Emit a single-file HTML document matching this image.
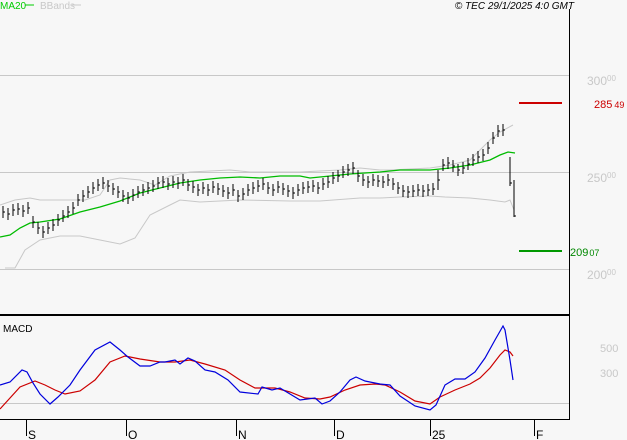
<!DOCTYPE html>
<html><head><meta charset="utf-8"><style>
html,body{margin:0;padding:0;background:#f7f7f7;width:627px;height:440px;overflow:hidden}
svg{display:block;font-family:"Liberation Sans",sans-serif}
</style></head><body>
<svg width="627" height="440" viewBox="0 0 627 440" xmlns="http://www.w3.org/2000/svg">
<rect width="627" height="440" fill="#f7f7f7"/>
<g stroke="#c8c8c8" stroke-width="1">
<line x1="0" y1="75.5" x2="569" y2="75.5"/>
<line x1="0" y1="172.5" x2="569" y2="172.5"/>
<line x1="0" y1="269.5" x2="569" y2="269.5"/>
<line x1="0" y1="403.5" x2="569" y2="403.5"/>
</g>
<line x1="569.5" y1="9" x2="569.5" y2="420" stroke="#000"/>
<line x1="0" y1="315" x2="570" y2="315" stroke="#000" stroke-width="2"/>
<line x1="0" y1="419.5" x2="570" y2="419.5" stroke="#000"/>
<g stroke="#000"><line x1="26.5" y1="419" x2="26.5" y2="436"/><line x1="126.5" y1="419" x2="126.5" y2="436"/><line x1="236.5" y1="419" x2="236.5" y2="436"/><line x1="334.5" y1="419" x2="334.5" y2="436"/><line x1="430.5" y1="419" x2="430.5" y2="436"/><line x1="534.5" y1="419" x2="534.5" y2="436"/></g>
<g font-size="12" fill="#000"><text x="28" y="439">S</text><text x="128" y="439">O</text><text x="238" y="439">N</text><text x="336" y="439">D</text><text x="432" y="439">25</text><text x="536" y="439">F</text></g>
<text x="0" y="9" font-size="10" fill="#00cc00">MA20</text><line x1="25" y1="5" x2="34" y2="5" stroke="#00cc00"/>
<text x="40" y="9" font-size="10" fill="#c8c8c8">BBands</text><line x1="72" y1="5" x2="81" y2="5" stroke="#c8c8c8"/>
<text x="574" y="9" font-size="10" font-style="italic" text-anchor="end" fill="#000">© TEC 29/1/2025 4:0 GMT</text>
<g fill="#c8c8c8" font-size="12"><text x="587" y="85">300<tspan font-size="8" dy="-4">00</tspan></text><text x="587" y="182">250<tspan font-size="8" dy="-4">00</tspan></text><text x="587" y="279">200<tspan font-size="8" dy="-4">00</tspan></text>
<text x="600" y="352" font-size="11">500</text><text x="600" y="377" font-size="11">300</text></g>
<text x="594" y="108" font-size="11" fill="#cc0000">285<tspan font-size="9" dx="2">49</tspan></text>
<text x="570" y="256" font-size="11" fill="#008800">209<tspan font-size="9" dx="1">07</tspan></text>
<line x1="519" y1="103" x2="562" y2="103" stroke="#cc0000" stroke-width="2"/>
<line x1="519" y1="251" x2="562" y2="251" stroke="#009900" stroke-width="2"/>
<text x="3" y="332" font-size="10" fill="#000">MACD</text>
<polyline fill="none" stroke="#c8c8c8" points="0,205 15,200 30,198 40,200 60,200 85,200 100,195 110,180 120,178 140,180 155,185 170,176 190,172 230,170 250,172 300,172 340,170 360,168 380,170 390,170 430,168 450,165 470,160 490,140 500,132 513,125"/>
<polyline fill="none" stroke="#c8c8c8" points="5,268 15,268 25,250 40,240 60,236 80,236 100,240 120,244 135,238 150,215 170,205 180,200 200,202 240,200 290,201 320,201 360,198 380,198 400,197 430,196 445,197 470,198 490,200 505,202 510,200 514,210"/>
<polyline fill="none" stroke="#00bb00" stroke-width="1.3" points="0,237 10,235 20,228 30,223 40,222 60,219 80,212 100,207 120,201 140,193 160,188 180,183 200,180 220,178 240,177 260,178 280,176 300,176 310,178 330,176 350,174 380,172 400,170 430,170 450,168 470,165 490,160 500,155 508,152 515,153"/>
<path fill="none" stroke="#000" stroke-width="1" d="M3 206V218M3 212h2M8 208V220M8 214h2M13 204V216M13 210h2M18 203V215M18 209h2M23 205V217M23 211h2M28 202V214M28 208h2M33 216V228M33 222h2M38 222V234M38 228h2M43 226V238M43 232h2M48 222V234M48 228h2M53 219V231M53 225h2M58 214V226M58 220h2M63 210V222M63 216h2M68 206V218M68 212h2M73 202V214M73 208h2M78 194V206M78 200h2M83 190V202M83 196h2M88 186V198M88 192h2M93 182V194M93 188h2M98 179V191M98 185h2M103 177V189M103 183h2M108 180V192M108 186h2M113 183V195M113 189h2M118 186V198M118 192h2M123 190V202M123 196h2M128 192V204M128 198h2M133 189V201M133 195h2M138 186V198M138 192h2M143 184V196M143 190h2M148 182V194M148 188h2M153 180V192M153 186h2M158 177V189M158 183h2M163 176V188M163 182h2M168 178V190M168 184h2M173 176V188M173 182h2M178 177V189M178 183h2M183 174V186M183 180h2M188 179V191M188 185h2M193 181V193M193 187h2M198 184V196M198 190h2M203 182V194M203 188h2M208 184V196M208 190h2M213 181V193M213 187h2M218 183V195M218 189h2M223 185V197M223 191h2M228 187V199M228 193h2M233 184V196M233 190h2M238 190V202M238 196h2M243 188V200M243 194h2M248 184V196M248 190h2M253 182V194M253 188h2M258 180V192M258 186h2M263 178V190M263 184h2M268 182V194M268 188h2M273 184V196M273 190h2M278 181V193M278 187h2M283 183V195M283 189h2M288 185V197M288 191h2M293 187V199M293 193h2M298 184V196M298 190h2M303 182V194M303 188h2M308 181V193M308 187h2M313 180V192M313 186h2M318 182V194M318 188h2M323 178V190M323 184h2M328 176V188M328 182h2M333 172V184M333 178h2M338 170V182M338 176h2M343 166V178M343 172h2M348 164V176M348 170h2M353 162V174M353 168h2M358 170V182M358 176h2M363 174V186M363 180h2M368 176V188M368 182h2M373 174V186M373 180h2M378 175V187M378 181h2M383 176V188M383 182h2M388 174V186M388 180h2M393 178V190M393 184h2M398 182V194M398 188h2M403 185V197M403 191h2M408 186V198M408 192h2M413 185V197M413 191h2M418 184V196M418 190h2M423 185V197M423 191h2M428 184V196M428 190h2M433 183V195M433 189h2M438 170V190M438 180h2M443 159V171M443 165h2M448 157V169M448 163h2M453 160V172M453 166h2M458 164V176M458 170h2M463 162V174M463 168h2M468 158V170M468 164h2M473 154V166M473 160h2M478 151V163M478 157h2M483 149V161M483 155h2M488 142V154M488 148h2M493 132V144M493 138h2M498 125V137M498 131h2M503 124V136M503 130h2M510 157V186M510 183h2M514 180V217M514 216h2"/>
<polyline fill="none" stroke="#cc0000" stroke-width="1.2" points="0,409 10,398 20,387 35,381 45,385 55,390 65,394 80,391 95,380 110,362 125,356 140,359 160,362 175,362 190,360 205,364 225,370 240,380 255,388 275,388 290,392 305,398 320,399 330,397 345,390 360,385 375,384 385,385 400,392 415,401 430,404 440,397 455,390 470,384 480,378 490,368 500,355 505,350 510,352 513,356"/>
<polyline fill="none" stroke="#0000dd" stroke-width="1.2" points="0,385 10,382 22,370 27,372 33,383 40,394 50,404 58,397 70,385 80,370 95,350 110,342 120,350 128,357 140,366 150,366 160,362 165,362 175,360 180,364 188,358 195,361 205,370 215,372 228,380 240,392 258,394 262,387 272,390 280,388 290,394 300,400 315,398 322,404 330,401 340,392 350,380 356,377 365,381 380,384 390,385 400,396 415,406 430,410 436,405 445,385 455,379 465,379 475,372 485,358 495,340 503,326 505,330 510,360 513,380"/>
</svg>
</body></html>
